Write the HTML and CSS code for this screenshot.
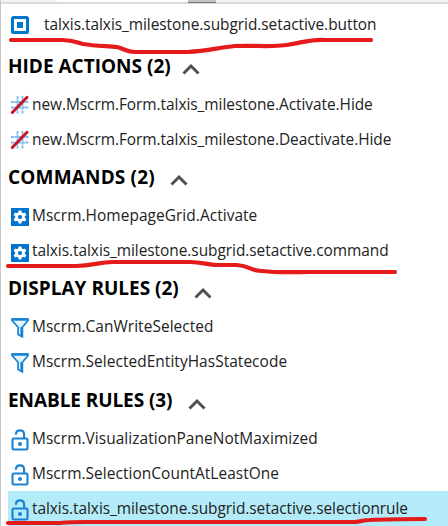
FILE: index.html
```html
<!DOCTYPE html>
<html lang="en">
<head>
<meta charset="utf-8">
<title>Ribbon elements</title>
<link rel="stylesheet" href="styles.css">
</head>
<body>
<svg class="defs" aria-hidden="true">
  <symbol id="chevron" viewBox="0 0 18 11"><path d="M1.500 9.500 9 2l7.500 7.500" fill="none" stroke="#505050" stroke-width="2.900"/></symbol>
  <symbol id="button" viewBox="0 0 18 18"><rect x="1.500" y="1.500" width="15" height="15" rx="1" fill="#fff" stroke="#0078cf" stroke-width="3"/><rect x="6" y="6" width="6" height="6" fill="#0078cf"/></symbol>
  <symbol id="hide" viewBox="0 0 20 20"><path d="M7.500 1v18M12.500 1v18M1 7h18M1 12.500h18" fill="none" stroke="#7cbcea" stroke-width="1.800" stroke-dasharray="3 .6"/><path d="M2.300 17.500 17 2.300" stroke="#c5162c" stroke-width="3" stroke-linecap="round"/></symbol>
  <symbol id="gear" viewBox="0 0 18 18"><path d="M0 0h18v18H0z" fill="#0074cc"/><g fill="#fff"><circle cx="9" cy="9" r="4.800"/><path id="tooth" d="M7.600 2.400h2.800l.5 3H7.100zM7.600 15.600h2.800l.5-3H7.100z"/><use href="#tooth" transform="rotate(60 9 9)"/><use href="#tooth" transform="rotate(120 9 9)"/></g><circle cx="9" cy="9" r="2.100" fill="#0074cc"/></symbol>
  <symbol id="funnel" viewBox="0 0 18 21"><path d="M1 1.200h16v1.300l-5.600 6.800v9.500l-4.300-2.300V9.300L1 2.500z" fill="#e3f2fc" stroke="#1380d0" stroke-width="1.700"/><path d="M1 1.500h16" stroke="#1380d0" stroke-width="2.400"/><path d="M10.700 9v9.500" stroke="#1380d0" stroke-width="2.600"/></symbol>
  <symbol id="lock" viewBox="0 0 18 22"><rect x="1.500" y="9.500" width="15" height="11" rx="1.200" fill="none" stroke="#1b82d1" stroke-width="2.100"/><path d="M4.800 5.800C5 2.800 6.700 1.400 8.900 1.400c2.500 0 4.200 1.700 4.200 4.200V10" fill="none" stroke="#1b82d1" stroke-width="2.100"/><circle cx="9" cy="15" r="2" fill="#1b82d1"/></symbol>
</svg>
<main class="panel">
  <div class="top-edge"><span class="field"></span><span class="thumb"></span></div>
  <div class="row row-button"><svg class="icon square"><use href="#button"/></svg><span class="long">talxis.talxis_milestone.subgrid.setactive.button</span></div>
  <section>
    <h2><span>HIDE ACTIONS (2)</span><svg class="chevron hide-chevron"><use href="#chevron"/></svg></h2>
    <div class="row"><svg class="icon grid"><use href="#hide"/></svg><span class="long">new.Mscrm.Form.talxis_milestone.Activate.Hide</span></div>
    <div class="row"><svg class="icon grid"><use href="#hide"/></svg><span class="long">new.Mscrm.Form.talxis_milestone.Deactivate.Hide</span></div>
  </section>
  <section>
    <h2><span class="wide">COMMANDS (2)</span><svg class="chevron command-chevron"><use href="#chevron"/></svg></h2>
    <div class="row"><svg class="icon square low"><use href="#gear"/></svg><span class="rule">Mscrm.HomepageGrid.Activate</span></div>
    <div class="row"><svg class="icon square lower"><use href="#gear"/></svg><span class="long">talxis.talxis_milestone.subgrid.setactive.command</span></div>
  </section>
  <section class="display">
    <h2><span>DISPLAY RULES (2)</span><svg class="chevron display-chevron"><use href="#chevron"/></svg></h2>
    <div class="row"><svg class="icon funnel"><use href="#funnel"/></svg><span class="rule">Mscrm.CanWriteSelected</span></div>
    <div class="row"><svg class="icon funnel"><use href="#funnel"/></svg><span class="rule">Mscrm.SelectedEntityHasStatecode</span></div>
  </section>
  <section class="enable">
    <h2><span class="tight">ENABLE RULES (3)</span><svg class="chevron enable-chevron"><use href="#chevron"/></svg></h2>
    <div class="row"><svg class="icon lock"><use href="#lock"/></svg><span class="rule">Mscrm.VisualizationPaneNotMaximized</span></div>
    <div class="row"><svg class="icon lock"><use href="#lock"/></svg><span class="rule">Mscrm.SelectionCountAtLeastOne</span></div>
    <div class="row selected"><svg class="icon lock"><use href="#lock"/></svg><span class="long">talxis.talxis_milestone.subgrid.setactive.selectionrule</span></div>
  </section>
  <svg class="marks" viewBox="0 0 448 526" aria-hidden="true">
    <path d="M11 40H62C73 40 76 42 83 44C95 46 108 46 117 47C125 49 126 52 135 52H188C207 51 217 48 235 46C256 45 275 48 292 44C308 41 314 39 325 40H371"/>
    <path d="M8 266H76C93 266 98 262 113 262H190C202 262 208 265 217 265H237C251 266 250 271 262 271C280 273 294 272 310 272H395"/>
    <path d="M8 523H60C70 522 75 522 85 522H355C362 522 361 520 370 520C388 519 405 519 425 519"/>
  </svg>
</main>
</body>
</html>
```

FILE: styles.css
```css
* { box-sizing: border-box; }
body { margin: 0; background: #fff; color: #222; font: 15.45px/20px "Open Sans", "Noto Sans", sans-serif; }
.defs { position: absolute; width: 0; height: 0; }
.panel { position: relative; width: 448px; height: 526px; overflow: hidden; border-left: 1px solid #c8c8c8; display: flex; flex-direction: column; }
.top-edge { display: flex; height: 4px; flex: none; background: #f2f2f2; border-bottom: 2px solid #dbdbd9; padding-left: 56px; }
.field { width: 131px; height: 2px; background: #fff; }
.thumb { width: 28px; height: 3px; background: #c4c4c4; border-bottom: 1px solid #777; }
.row { display: flex; align-items: center; height: 35px; flex: none; margin-left: 7px; padding-left: 3px; white-space: nowrap; }
.row span { margin: -2px 0 0 -1px; }
.row-button { height: 42px; }
.row-button .icon { margin-right: 16px; }
.icon { flex: none; width: 18px; margin-right: 4px; }
.square { height: 18px; }
.low { margin-top: 2px; }
.lower { margin-top: 5px; }
.grid { width: 20px; height: 20px; margin: 1px 3px 0 -1px; }
.funnel { height: 21px; margin-top: 4px; }
.lock { height: 22px; margin-top: 2px; }
.row .long { letter-spacing: -.05px; }
.row .rule { letter-spacing: .05px; }
.selected { background: #b3ebf9; }
section { height: 111px; flex: none; }
.display { height: 112px; }
.enable { height: 146px; }
h2 { display: flex; align-items: center; margin: 0; height: 41px; padding-left: 7px; font-size: 19px; line-height: 24px; font-weight: 700; color: #000; white-space: nowrap; }
h2 span { margin-top: -2px; }
.wide { letter-spacing: .17px; }
.tight { letter-spacing: -.08px; }
.chevron { width: 18px; height: 11px; margin-top: 5px; }
.hide-chevron { margin-left: 11px; }
.command-chevron { margin-left: 15px; }
.display-chevron { margin-left: 15px; margin-top: 9px; }
.enable-chevron { margin-left: 16px; margin-top: 7px; }
.marks { position: absolute; left: -1px; top: 0; width: 448px; height: 526px; fill: none; stroke: #e51b1b; stroke-width: 4.2; stroke-linecap: round; stroke-linejoin: round; pointer-events: none; }
```
